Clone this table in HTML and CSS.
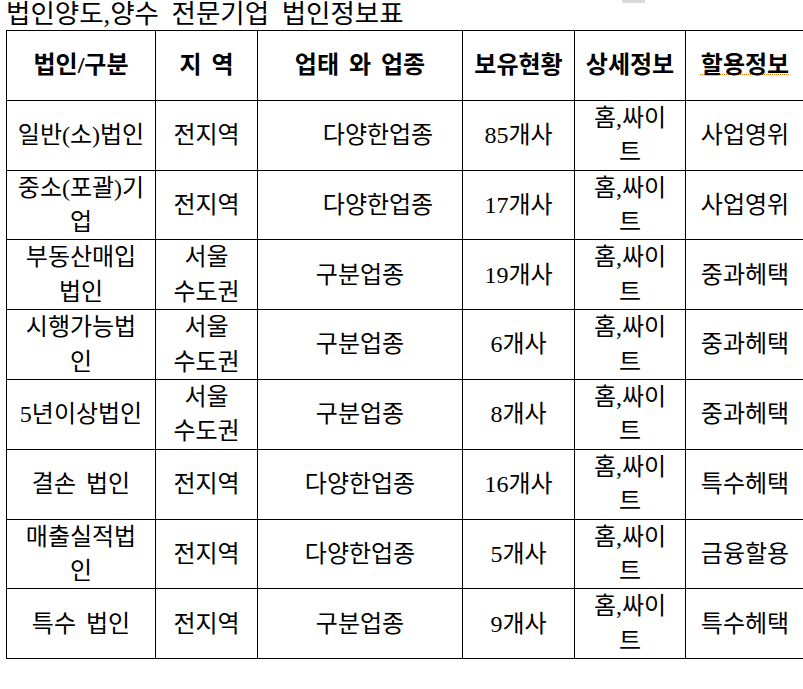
FILE: index.html
```html
<!DOCTYPE html>
<html lang="ko">
<head>
<meta charset="utf-8">
<title>법인정보표</title>
<link rel="stylesheet" href="styles.css">
</head>
<body>
<div class="page">
  <div class="title-bar">
    <h1 class="title">법인양도,양수 전문기업 법인정보표</h1>
    <div class="title-mark"></div>
  </div>
  <table class="info-table">
    <colgroup>
      <col class="c1"><col class="c2"><col class="c3"><col class="c4"><col class="c5"><col class="c6">
    </colgroup>
    <thead>
      <tr>
        <th>법인/구분</th>
        <th>지&nbsp;역</th>
        <th>업태 와 업종</th>
        <th>보유현황</th>
        <th>상세정보</th>
        <th><span class="spell">할용정보</span></th>
      </tr>
    </thead>
    <tbody>
      <tr>
        <td>일반(소)법인</td><td>전지역</td><td class="shift">다양한업종</td><td>85개사</td><td>홈,싸이트</td><td>사업영위</td>
      </tr>
      <tr>
        <td>중소(포괄)기업</td><td>전지역</td><td class="shift">다양한업종</td><td>17개사</td><td>홈,싸이트</td><td>사업영위</td>
      </tr>
      <tr>
        <td>부동산매입법인</td><td class="region">서울 수도권</td><td>구분업종</td><td>19개사</td><td>홈,싸이트</td><td>중과헤택</td>
      </tr>
      <tr>
        <td>시행가능법인</td><td class="region">서울 수도권</td><td>구분업종</td><td>6개사</td><td>홈,싸이트</td><td>중과헤택</td>
      </tr>
      <tr>
        <td>5년이상법인</td><td class="region">서울 수도권</td><td>구분업종</td><td>8개사</td><td>홈,싸이트</td><td>중과헤택</td>
      </tr>
      <tr>
        <td>결손 법인</td><td>전지역</td><td>다양한업종</td><td>16개사</td><td>홈,싸이트</td><td>특수헤택</td>
      </tr>
      <tr>
        <td>매출실적법인</td><td>전지역</td><td>다양한업종</td><td>5개사</td><td>홈,싸이트</td><td>금융할용</td>
      </tr>
      <tr>
        <td>특수 법인</td><td>전지역</td><td>구분업종</td><td>9개사</td><td>홈,싸이트</td><td>특수헤택</td>
      </tr>
    </tbody>
  </table>
</div>
</body>
</html>
```

FILE: styles.css
```css
html, body {
  margin: 0;
  padding: 0;
  background: #ffffff;
  overflow: hidden;
}

body {
  font-family: "Liberation Serif", "Noto Sans CJK KR", serif;
  color: #000000;
}

.page {
  padding: 0 0 0 6px;
}

.title-bar {
  display: grid;
  grid-template-columns: 616px 23px;
  align-items: start;
  height: 30px;
}

.title {
  margin: 0;
  font-size: 26.5px;
  font-weight: normal;
  line-height: 28px;
  word-spacing: 6px;
  white-space: nowrap;
}

.title-mark {
  height: 3px;
  background: #d9d9d9;
}

.info-table {
  border-collapse: collapse;
  table-layout: fixed;
  width: 798px;
  font-size: 24px;
  line-height: 34.4px;
  word-spacing: 4px;
}

.c1 { width: 149px; }
.c2 { width: 102px; }
.c3 { width: 205px; }
.c4 { width: 112px; }
.c5 { width: 111px; }
.c6 { width: 119px; }

.info-table th,
.info-table td {
  border: 1px solid #000000;
  padding: 0 10px;
  text-align: center;
  vertical-align: middle;
}

.info-table tr {
  height: 69.75px;
}

.info-table th {
  font-weight: bold;
}

.info-table td.shift {
  padding-left: 46px;
}

.info-table td.region {
  word-break: keep-all;
}

.spell {
  text-decoration: underline dotted #f07800;
  text-decoration-thickness: 1px;
  text-underline-offset: 1px;
}
```
